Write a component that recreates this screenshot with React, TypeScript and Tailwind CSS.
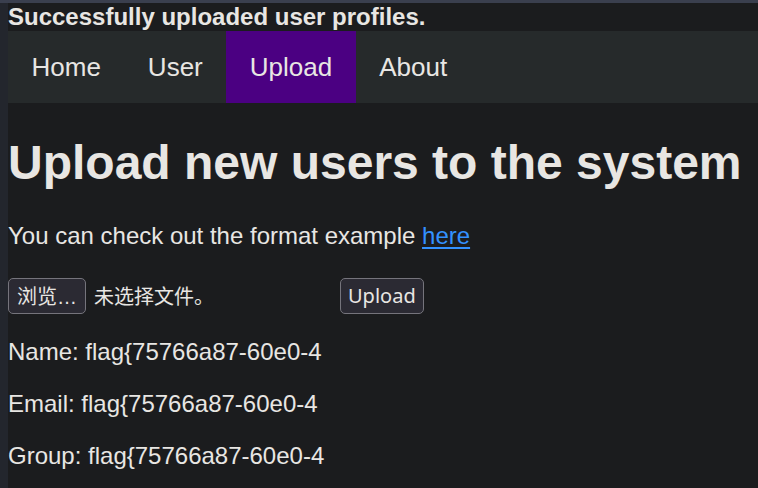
export default function App() {
  return (
    <div className="h-[488px] w-[758px] overflow-hidden flex flex-col bg-[#1b1c1e] text-[#e8e6e3] font-['Liberation_Sans',Arial,sans-serif] text-[24px]">
      {/* window edge */}
      <div className="h-[3px] shrink-0 bg-[#3a3f4e]" />
      <div className="flex flex-1 min-h-0">
        <div className="w-2 shrink-0 bg-[#23262d]" />

        <main className="flex-1 min-w-0">
          <div className="font-bold leading-[28px] whitespace-nowrap">
            Successfully uploaded user profiles.
          </div>

          {/* Nav */}
          <nav className="flex h-[72px] bg-[#262a2b] text-[26px]">
            <a className="flex items-center px-[23.5px]">Home</a>
            <a className="flex items-center px-[23.5px]">User</a>
            <a className="flex items-center px-[23.5px] bg-[#4b0082]">Upload</a>
            <a className="flex items-center px-[23.5px]">About</a>
          </nav>

          <h1 className="mt-[32px] mb-[32px] text-[48px] font-bold leading-[55px] whitespace-nowrap">
            Upload new users to the system
          </h1>

          <p className="leading-[28px]">
            You can check out the format example{" "}
            <a className="text-[#3391ff] underline decoration-2 underline-offset-[3px]">
              here
            </a>
          </p>

          {/* Upload form */}
          <form className="mt-[28px] flex items-start font-['Noto_Sans','Noto_Sans_CJK_SC',sans-serif] text-[20px]">
            <div className="flex items-center w-[332px]">
              <button
                type="button"
                className="h-[36px] px-[8px] rounded-[5px] border border-[#75747c] bg-[#2b2a33] leading-none font-['Noto_Sans_CJK_SC',sans-serif]"
              >
                浏览<span className="font-['Liberation_Sans',sans-serif]">…</span>
              </button>
              <span className="ml-[8px] font-['Noto_Sans_CJK_SC',sans-serif]">未选择文件。</span>
            </div>
            <button
              type="button"
              className="h-[36px] px-[7px] rounded-[5px] border border-[#75747c] bg-[#2b2a33] leading-none"
            >
              Upload
            </button>
          </form>

          <div className="mt-[24px] flex flex-col gap-[24px] leading-[28px]">
            <p>Name: flag{"{"}75766a87-60e0-4</p>
            <p>Email: flag{"{"}75766a87-60e0-4</p>
            <p>Group: flag{"{"}75766a87-60e0-4</p>
          </div>
        </main>
      </div>
    </div>
  );
}
